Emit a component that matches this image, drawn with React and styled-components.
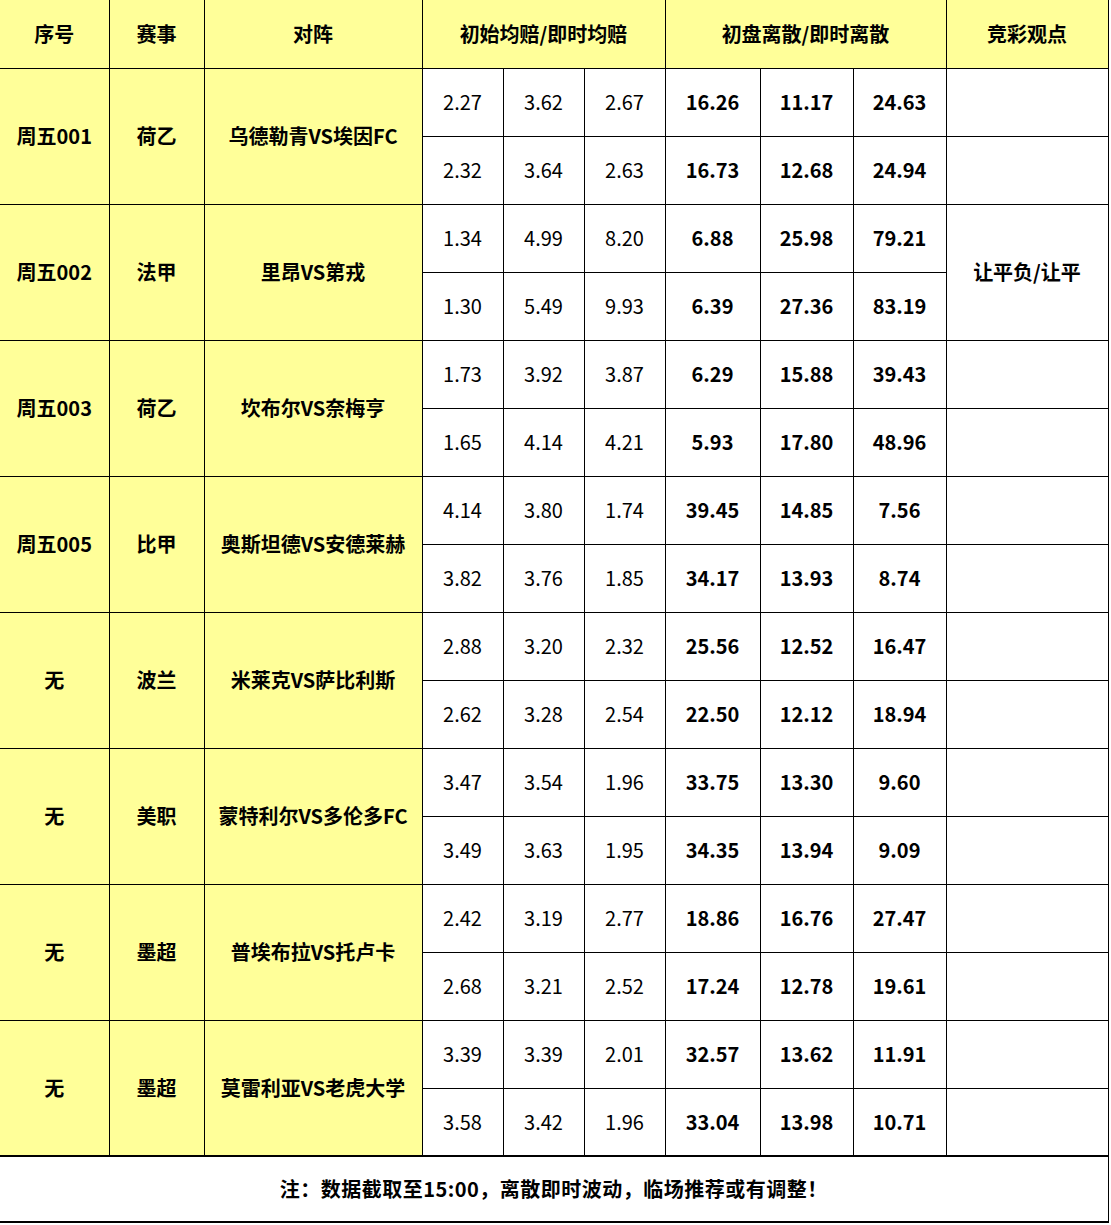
import React from "react";
import styled, { createGlobalStyle } from "styled-components";

const Global = createGlobalStyle`
  html, body { margin: 0; padding: 0; background: #ffffff; }
  body { font-family: "Noto Sans CJK SC", "Noto Sans", sans-serif; color: #000; }
`;

const Table = styled.table`
  border-collapse: collapse;
  table-layout: fixed;
  width: 1108px;
  font-size: 20px;
  line-height: 1;
`;

const Row = styled.tr`
  height: 68px;
`;

const baseCell = `
  border: 1px solid #000;
  text-align: center;
  vertical-align: middle;
  padding: 0;
`;

const HeadCell = styled.th`
  ${baseCell}
  background: #ffff99;
  font-weight: 700;
  border-top: none;
  ${(p) => (p.$first ? "border-left: none;" : "")}
`;

const InfoCell = styled.td`
  ${baseCell}
  background: #ffff99;
  font-weight: 700;
  ${(p) => (p.$first ? "border-left: none;" : "")}
`;

const NumCell = styled.td`
  ${baseCell}
  background: #ffffff;
  font-weight: ${(p) => (p.$bold ? 700 : 400)};
`;

const ViewCell = styled.td`
  ${baseCell}
  background: #ffffff;
  font-weight: 700;
`;

const FooterCell = styled.td`
  ${baseCell}
  border-left: none;
  border-top: 2px solid #000;
  border-bottom: 2px solid #000;
  height: 64px;
  font-weight: 700;
  letter-spacing: 0.5px;
  background: #ffffff;
`;

const widths = [109, 95, 218, 81, 81, 81, 95, 93, 93, 162];

const matches = [
  { id: "周五001", lg: "荷乙", vs: "乌德勒青VS埃因FC", r: [["2.27","3.62","2.67","16.26","11.17","24.63"],["2.32","3.64","2.63","16.73","12.68","24.94"]] },
  { id: "周五002", lg: "法甲", vs: "里昂VS第戎", view: "让平负/让平", r: [["1.34","4.99","8.20","6.88","25.98","79.21"],["1.30","5.49","9.93","6.39","27.36","83.19"]] },
  { id: "周五003", lg: "荷乙", vs: "坎布尔VS奈梅亨", r: [["1.73","3.92","3.87","6.29","15.88","39.43"],["1.65","4.14","4.21","5.93","17.80","48.96"]] },
  { id: "周五005", lg: "比甲", vs: "奥斯坦德VS安德莱赫", r: [["4.14","3.80","1.74","39.45","14.85","7.56"],["3.82","3.76","1.85","34.17","13.93","8.74"]] },
  { id: "无", lg: "波兰", vs: "米莱克VS萨比利斯", r: [["2.88","3.20","2.32","25.56","12.52","16.47"],["2.62","3.28","2.54","22.50","12.12","18.94"]] },
  { id: "无", lg: "美职", vs: "蒙特利尔VS多伦多FC", r: [["3.47","3.54","1.96","33.75","13.30","9.60"],["3.49","3.63","1.95","34.35","13.94","9.09"]] },
  { id: "无", lg: "墨超", vs: "普埃布拉VS托卢卡", r: [["2.42","3.19","2.77","18.86","16.76","27.47"],["2.68","3.21","2.52","17.24","12.78","19.61"]] },
  { id: "无", lg: "墨超", vs: "莫雷利亚VS老虎大学", r: [["3.39","3.39","2.01","32.57","13.62","11.91"],["3.58","3.42","1.96","33.04","13.98","10.71"]] },
];

export default function App() {
  return (
    <>
      <Global />
      <Table>
        <colgroup>
          {widths.map((w, i) => (
            <col key={i} style={{ width: w }} />
          ))}
        </colgroup>
        <thead>
          <Row>
            <HeadCell $first>序号</HeadCell>
            <HeadCell>赛事</HeadCell>
            <HeadCell>对阵</HeadCell>
            <HeadCell colSpan={3}>初始均赔/即时均赔</HeadCell>
            <HeadCell colSpan={3}>初盘离散/即时离散</HeadCell>
            <HeadCell>竞彩观点</HeadCell>
          </Row>
        </thead>
        <tbody>
          {matches.map((m, mi) =>
            m.r.map((vals, ri) => (
              <Row key={`${mi}-${ri}`}>
                {ri === 0 && (
                  <>
                    <InfoCell $first rowSpan={2}>{m.id}</InfoCell>
                    <InfoCell rowSpan={2}>{m.lg}</InfoCell>
                    <InfoCell rowSpan={2}>{m.vs}</InfoCell>
                  </>
                )}
                {vals.map((v, vi) => (
                  <NumCell key={vi} $bold={vi >= 3}>{v}</NumCell>
                ))}
                {m.view ? (
                  ri === 0 && <ViewCell rowSpan={2}>{m.view}</ViewCell>
                ) : (
                  <ViewCell />
                )}
              </Row>
            ))
          )}
          <tr>
            <FooterCell colSpan={10}>注：数据截取至15:00，离散即时波动，临场推荐或有调整！</FooterCell>
          </tr>
        </tbody>
      </Table>
    </>
  );
}
